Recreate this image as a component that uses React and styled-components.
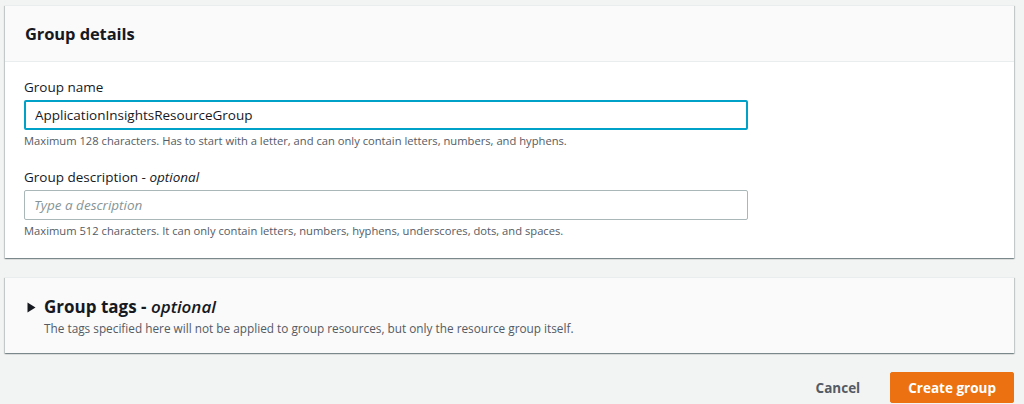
import React from "react";
import styled, { createGlobalStyle } from "styled-components";

const GlobalStyle = createGlobalStyle`
  *, *:before, *:after { box-sizing: border-box; }
  body {
    margin: 0;
    background: #f2f3f3;
    font-family: "Open Sans", "Noto Sans", Arial, sans-serif;
    color: #16191f;
  }
`;

const Page = styled.div`
  padding: 5px 10px 0 5px;
  display: flex;
  flex-direction: column;
  gap: 19px;
`;

const Card = styled.section`
  background: ${(p) => p.bg || "#ffffff"};
  box-shadow: 0 1px 1px 0 rgba(0, 28, 36, 0.3), 1px 1px 1px 0 rgba(0, 28, 36, 0.15),
    -1px 1px 1px 0 rgba(0, 28, 36, 0.15);
  border-top: 1px solid #eaeded;
`;

const CardHeader = styled.header`
  background: #fafafa;
  border-bottom: 1px solid #eaeded;
  height: 56px;
  display: flex;
  align-items: center;
  padding: 0 20px;
`;

const Title = styled.h2`
  margin: 0;
  font-size: 16.5px;
  font-weight: 700;
  letter-spacing: -0.1px;
`;

const CardBody = styled.div`
  padding: 15px 19px 19px;
  display: flex;
  flex-direction: column;
  gap: 18px;
`;

const Field = styled.div`
  display: flex;
  flex-direction: column;
`;

const Label = styled.label`
  font-size: 13.5px;
  line-height: 20px;
  margin-bottom: 3px;
  em { font-style: italic; }
`;

const Input = styled.input`
  width: 724px;
  height: 30px;
  padding: 0 9px;
  font-family: inherit;
  font-size: 13.5px;
  color: #16191f;
  background: #fff;
  border: ${(p) => (p.$focused ? "2px solid #00a1c9" : "1px solid #aab7b8")};
  border-radius: 2px;
  outline: none;
  &::placeholder {
    color: #879596;
    font-style: italic;
  }
`;

const Hint = styled.div`
  font-size: 11.2px;
  line-height: 16px;
  color: #545b64;
  margin-top: 3px;
`;

const Expander = styled.div`
  padding: 17px 20px 17px 22px;
  display: flex;
  gap: 8px;
  align-items: flex-start;
`;

const Caret = styled.svg`
  width: 9px;
  height: 11px;
  margin-top: 7px;
  flex: none;
`;

const ExpanderText = styled.div`
  display: flex;
  flex-direction: column;
`;

const ExpanderTitle = styled.h3`
  margin: 0;
  font-size: 17px;
  line-height: 24px;
  font-weight: 700;
  em { font-style: italic; font-weight: 600; }
`;

const Description = styled.div`
  font-size: 11.8px;
  line-height: 16px;
  margin-top: 1px;
  color: #545b64;
`;

const Actions = styled.div`
  display: flex;
  justify-content: flex-end;
  align-items: center;
  gap: 30px;
`;

const Button = styled.button`
  font-family: inherit;
  font-size: 13.5px;
  font-weight: 700;
  height: 31px;
  border-radius: 2px;
  cursor: pointer;
  padding: ${(p) => (p.$primary ? "0 17px" : "0")};
  color: ${(p) => (p.$primary ? "#ffffff" : "#545b64")};
  background: ${(p) => (p.$primary ? "#ec7211" : "transparent")};
  border: ${(p) => (p.$primary ? "1px solid #ec7211" : "none")};
`;

export default function App() {
  return (
    <>
      <GlobalStyle />
      <Page>
        <Card>
          <CardHeader>
            <Title>Group details</Title>
          </CardHeader>
          <CardBody>
            <Field>
              <Label>Group name</Label>
              <Input $focused defaultValue="ApplicationInsightsResourceGroup" />
              <Hint>
                Maximum 128 characters. Has to start with a letter, and can only contain letters,
                numbers, and hyphens.
              </Hint>
            </Field>
            <Field>
              <Label>
                Group description - <em>optional</em>
              </Label>
              <Input placeholder="Type a description" />
              <Hint>
                Maximum 512 characters. It can only contain letters, numbers, hyphens, underscores,
                dots, and spaces.
              </Hint>
            </Field>
          </CardBody>
        </Card>
        <Card bg="#fafafa">
          <Expander>
            <Caret viewBox="0 0 9 11">
              <path d="M0.5 0.5 L8.5 5.5 L0.5 10.5 Z" fill="#16191f" />
            </Caret>
            <ExpanderText>
              <ExpanderTitle>
                Group tags - <em>optional</em>
              </ExpanderTitle>
              <Description>
                The tags specified here will not be applied to group resources, but only the
                resource group itself.
              </Description>
            </ExpanderText>
          </Expander>
        </Card>
        <Actions>
          <Button>Cancel</Button>
          <Button $primary>Create group</Button>
        </Actions>
      </Page>
    </>
  );
}
